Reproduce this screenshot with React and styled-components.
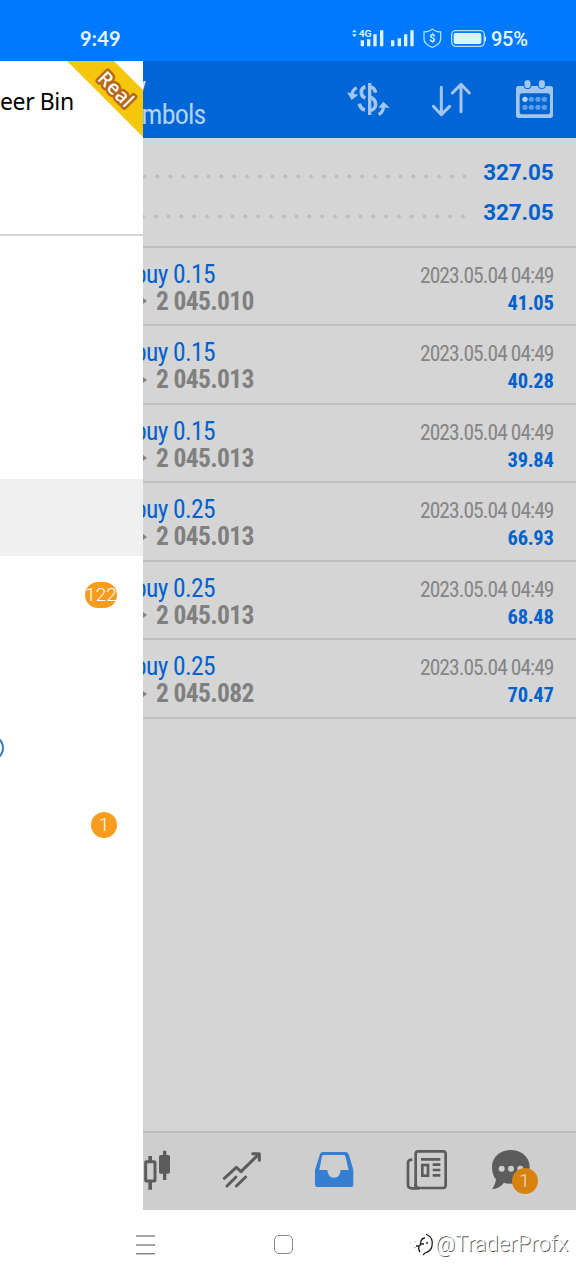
import React from 'react';
import styled, { createGlobalStyle, css } from 'styled-components';

const deals = [
  { volume: 'buy 0.15', price: '2 045.010', time: '2023.05.04 04:49', profit: '41.05' },
  { volume: 'buy 0.15', price: '2 045.013', time: '2023.05.04 04:49', profit: '40.28' },
  { volume: 'buy 0.15', price: '2 045.013', time: '2023.05.04 04:49', profit: '39.84' },
  { volume: 'buy 0.25', price: '2 045.013', time: '2023.05.04 04:49', profit: '66.93' },
  { volume: 'buy 0.25', price: '2 045.013', time: '2023.05.04 04:49', profit: '68.48' },
  { volume: 'buy 0.25', price: '2 045.082', time: '2023.05.04 04:49', profit: '70.47' }
];

const StatusIcons = () => (
  <svg width="136" height="24" viewBox="60 48 408 72" fill="#d9f4ff">
    <path d="M66 67l7-8 7 8zM66 73l7 8 7-8z" />
    <path d="M92 91h10v18H92zM111 88h10v21h-10zM130 73h10v36h-10zM150 61h10v48h-10z" />
    <text x="86" y="81" fontSize="29" fontWeight="700" fontFamily="Roboto" textLength="39" lengthAdjust="spacingAndGlyphs">4G</text>
    <path d="M183 91h10v18h-10zM203 85h10v24h-10zM222 73h10v36h-10zM241 61h10v48h-10z" />
    <path d="M307 58c8 6 17 8 25 8v20c0 13-12 21-25 26-13-5-25-13-25-26V66c8 0 17-2 25-8z" fill="none" stroke="#a9dcff" strokeWidth="4" />
    <text x="307" y="96" fontSize="32" fontWeight="700" fontFamily="Roboto" textAnchor="middle">$</text>
    <rect x="365" y="62" width="98" height="47" rx="12" fill="none" stroke="#a9dcff" strokeWidth="4" />
    <rect x="371" y="69" width="83" height="33" rx="5" />
    <path d="M465 78c5 2 5 14 0 16z" />
  </svg>
);

const SwapIcon = () => (
  <svg width="82" height="77" viewBox="0 153 246 231" fill="none" stroke="#a2c5ee" strokeWidth="11">
    <path d="M119 219v96" strokeWidth="10" />
    <path d="M119 231q15 1 18 17M119 262c24 4 24 38 0 39M106 230c-16 5-16 28 0 34M88 281q3 15 17 19" />
    <path d="M80 233q-14 8-14 22M146 314q14-8 14-24" strokeWidth="10" />
    <path d="M51 247l14 23 20-16zM145 293l15-18 19 18z" fill="#a2c5ee" stroke="none" />
  </svg>
);

const SortIcon = () => (
  <svg width="82" height="77" viewBox="246 153 246 231" fill="none" stroke="#a2c5ee" strokeWidth="9" strokeLinecap="round" strokeLinejoin="round">
    <path d="M334 232v82M310 289l24 25 25-25" />
    <path d="M393 305v-81M367 249l26-26 25 26" />
  </svg>
);

const CalendarIcon = () => (
  <svg width="82" height="77" viewBox="492 153 246 231" fill="#a2c5ee">
    <path fillRule="evenodd" d="M566 228h95q8 0 8 8v80q0 8-8 8h-95q-8 0-8-8v-80q0-8 8-8zm11 22q-8 0-8 8v47q0 8 8 8h75q8 0 8-8v-47q0-8-8-8z" />
    <rect x="582" y="209" width="21" height="27" rx="9" stroke="#0066d6" strokeWidth="3" />
    <rect x="625" y="209" width="21" height="27" rx="9" stroke="#0066d6" strokeWidth="3" />
    {[585, 604, 624, 643].map((x) => (
      <g key={x} fill="#5c9de6">
        <circle cx={x} cy="268" r="8" fill={x === 585 ? '#b9d3f2' : '#5c9de6'} />
        <circle cx={x} cy="292" r="8" />
      </g>
    ))}
  </svg>
);

const CandlesIcon = () => (
  <svg width="92" height="76" viewBox="-78 39 276 228" fill="#5c5c5c">
    <path d="M55 108h11v18H55zM55 182h11v27H55zM99 92h10v20H99zM99 155h10v25H99z" />
    <rect x="47" y="125" width="28" height="58" rx="2" fill="none" stroke="#5c5c5c" strokeWidth="9" />
    <rect x="87" y="105" width="33" height="56" rx="5" />
  </svg>
);

const TrendIcon = () => (
  <svg width="92" height="76" viewBox="198 39 276 228" fill="none" stroke="#5c5c5c" strokeWidth="9" strokeLinecap="round" strokeLinejoin="round">
    <path d="M283 175l36-33 14 13 54-53M368 101h20v20" />
    <path d="M291 198l27-27M319 198l28-27" />
  </svg>
);

const InboxIcon = () => (
  <svg width="92" height="76" viewBox="474 39 276 228" fill="#347fd3">
    <path fillRule="evenodd" d="M579 96h66q9 0 12 9l13 45v45q0 6-6 6H561q-6 0-6-6v-45l14-45q2-9 10-9zm2 9q-4 0-5 4l-8 41h24q2 23 20 23t20-23h24l-10-41q-1-4-5-4z" />
  </svg>
);

const NewsIcon = () => (
  <svg width="92" height="76" viewBox="81 39 276 228" fill="none" stroke="#5c5c5c" strokeWidth="8">
    <rect x="188" y="94" width="90" height="110" rx="8" />
    <path d="M178 119q-13 0-13 10v66q0 10 12 10h22q-12-1-12-14" />
    <path d="M204 118h58M239 134h23M239 150h23M239 166h23" />
    <rect x="208" y="135" width="17" height="32" />
  </svg>
);

const ChatIcon = () => (
  <svg width="92" height="76" viewBox="357 39 276 228" fill="#5c5c5c">
    <path d="M473 90c32 0 57 22 57 50s-25 51-57 51c-8 0-14-1-20-3-10 13-22 19-36 19 6-7 11-19 12-29-8-9-12-23-12-38 0-28 24-50 56-50z" />
    <g fill="#cecece">
      <circle cx="446" cy="146" r="9" />
      <circle cx="474" cy="146" r="9" />
      <circle cx="502" cy="146" r="9" />
    </g>
  </svg>
);

const App = () => (
  <Screen>
    <GlobalStyle />
    <StatusBar>
      <Clock>9:49</Clock>
      <StatusIcons />
      <Battery>95%</Battery>
    </StatusBar>
    <Body>
      <Drawer>
        <Profile>
          <AccountName>eer Bin</AccountName>
          <Corner viewBox="0 0 76 76">
            <path d="M0 0h47l29 29v47z" fill="#f6c60a" />
            <text x="0" y="0" transform="translate(29.500 18.500) rotate(45)">Real</text>
          </Corner>
        </Profile>
        <MenuRow $height={243} />
        <MenuRow $height={77} $active />
        <MenuRow $height={77}><Badge $wide>122</Badge></MenuRow>
        <MenuRow $height={77} />
        <MenuRow $height={76} $start><Ring /></MenuRow>
        <MenuRow $height={77}><Badge>1</Badge></MenuRow>
      </Drawer>
      <Main>
        <Header>
          <Titles>
            <Title>History</Title>
            <Subtitle>All symbols</Subtitle>
          </Titles>
          <SwapIcon />
          <SortIcon />
          <CalendarIcon />
        </Header>
        <Summary>
          <Total><Dots $end={0.4} />327.05</Total>
          <Total><Dots $end={2.1} />327.05</Total>
        </Summary>
        {deals.map((deal, index) => (
          <Deal key={index}>
            <Column>
              <Volume>{deal.volume}</Volume>
              <Price>
                <svg width="4" height="8" viewBox="0 0 4 8"><path d="M0 1l4 3-4 3z" fill="#808080" /></svg>
                {deal.price}
              </Price>
            </Column>
            <Column $right>
              <Time>{deal.time}</Time>
              <Profit>{deal.profit}</Profit>
            </Column>
          </Deal>
        ))}
        <TabBar>
          <CandlesIcon />
          <TrendIcon />
          <InboxIcon />
          <NewsIcon />
          <ChatTab>
            <ChatIcon />
            <ChatBadge>1</ChatBadge>
          </ChatTab>
        </TabBar>
      </Main>
    </Body>
    <NavBar>
      <svg width="20" height="20" viewBox="0 0 20 20" stroke="#8a8a8a" strokeWidth="1.6">
        <path d="M0 1h19M0 10h19M0 18.700h19" />
      </svg>
      <HomeKey />
      <Watermark>
        <svg width="27" height="24" viewBox="0 0 27 24" fill="none" stroke="#222" strokeWidth="1.300">
          <path d="M8 14h3q-1 4 1 6M12 14l1-5q1-3 4-3M12 12h4M18 2q8 4 6 12-1 5-7 7l-2 2" />
          <path d="M18 11h2" />
          <path d="M2 11h1M7 9v1M6 15l2 1" stroke="#bbb" />
        </svg>
        @TraderProfx
      </Watermark>
    </NavBar>
  </Screen>
);

const condensed = css`
  font-family: 'Roboto Condensed', Roboto, 'Liberation Sans', sans-serif;
  font-stretch: 75%;
  white-space: nowrap;
`;

const GlobalStyle = createGlobalStyle`
  * {
    box-sizing: border-box;
  }

  body {
    margin: 0;
    background: #fff;
    font-family: Roboto, 'Liberation Sans', sans-serif;
  }

  svg {
    display: block;
    flex-shrink: 0;
  }
`;

const Screen = styled.div`
  display: flex;
  flex-direction: column;
  width: 576px;
  height: 1280px;
  overflow: hidden;
`;

const StatusBar = styled.div`
  display: flex;
  align-items: flex-start;
  height: 61px;
  padding: 26px 0 0 80px;
  background: #0079ff;
  color: #e2f7ff;
`;

const Clock = styled.div`
  width: 270px;
  font: 700 20px/25px Lato, sans-serif;
  letter-spacing: 0.2px;
`;

const Battery = styled.div`
  margin-left: 5px;
  font: 500 20px/26px Roboto, sans-serif;
  letter-spacing: -0.3px;
`;

const Body = styled.div`
  display: flex;
  height: 1149px;
`;

const Drawer = styled.aside`
  width: 143px;
  overflow: hidden;
  background: #fff;
`;

const Profile = styled.div`
  position: relative;
  height: 175px;
  padding-top: 24px;
  border-bottom: 2px solid #d6d6d6;
`;

const AccountName = styled.div`
  color: #000;
  font: 400 23px/32px 'Noto Sans', sans-serif;
  letter-spacing: -0.4px;
  white-space: nowrap;
`;

const Corner = styled.svg`
  position: absolute;
  top: 0;
  right: 0;
  width: 76px;
  height: 76px;

  text {
    fill: #fff;
    stroke: #b5691a;
    stroke-width: 5px;
    stroke-linejoin: round;
    paint-order: stroke;
    font: 500 19.5px 'Noto Sans', sans-serif;
    letter-spacing: 0.4px;
  }
`;

const MenuRow = styled.div`
  display: flex;
  align-items: center;
  justify-content: ${props => (props.$start ? 'flex-start' : 'flex-end')};
  height: ${props => props.$height}px;
  padding-right: 26px;
  background: ${props => (props.$active ? '#f0f0f0' : '#fff')};
`;

const Badge = styled.span`
  width: ${props => (props.$wide ? 32 : 26)}px;
  height: 26px;
  border-radius: 13px;
  background: #f79c1c;
  color: #fff;
  font-size: 19px;
  font-weight: 300;
  line-height: 26px;
  text-align: center;
`;

const Ring = styled.span`
  width: 26px;
  height: 26px;
  margin-left: -22px;
  border: 2px solid #3b7cc4;
  border-radius: 50%;
`;

const Main = styled.main`
  display: flex;
  flex: 1;
  flex-direction: column;
  overflow: hidden;
  background: #d5d5d5;
`;

const Header = styled.header`
  display: flex;
  height: 77px;
  flex-shrink: 0;
  background: #0066d6;
`;

const Titles = styled.div`
  display: flex;
  flex-direction: column;
  width: 187px;
  padding-top: 13px;
`;

const Title = styled.div`
  ${condensed}
  display: flex;
  justify-content: flex-end;
  width: 3px;
  color: #e5effb;
  font-size: 22px;
  line-height: 24px;
`;

const Subtitle = styled.div`
  ${condensed}
  display: flex;
  justify-content: flex-end;
  width: 62.5px;
  color: #b2d1f3;
  font-size: 28px;
  letter-spacing: -0.8px;
  line-height: 34px;
`;

const Summary = styled.div`
  height: 109.5px;
  flex-shrink: 0;
  padding: 14px 22.5px 0 0;
  border-bottom: 2px solid #bfbfbf;
`;

const Total = styled.div`
  display: flex;
  align-items: center;
  height: 40px;
  color: #0062cc;
  font-size: 22.5px;
  font-weight: 700;
  letter-spacing: -0.15px;
`;

const Dots = styled.span`
  flex: 1;
  height: 5px;
  margin: 8px 12px 0 0;
  background: radial-gradient(circle, #bcbcbc 1.6px, transparent 2.3px) right ${props => props.$end}px center / 12.8px 5px repeat-x;
`;

const Deal = styled.div`
  display: flex;
  justify-content: space-between;
  height: 78.5px;
  flex-shrink: 0;
  padding: 11px 22.5px 0 0;
  border-bottom: 2px solid #bfbfbf;
`;

const Column = styled.div`
  display: flex;
  flex-direction: column;
  align-items: ${props => (props.$right ? 'flex-end' : 'flex-start')};
`;

const Volume = styled.div`
  ${condensed}
  margin-left: -9px;
  color: #0062cc;
  font-size: 25.5px;
  letter-spacing: -0.6px;
  line-height: 30px;
`;

const Price = styled.div`
  ${condensed}
  display: flex;
  align-items: center;
  gap: 9px;
  color: #808080;
  font-size: 25.5px;
  font-weight: 700;
  letter-spacing: -0.65px;
  line-height: 25px;
`;

const Time = styled.div`
  ${condensed}
  color: #868686;
  font-size: 21.5px;
  letter-spacing: -0.95px;
  line-height: 33px;
`;

const Profit = styled.div`
  ${condensed}
  color: #0062cc;
  font-size: 20.5px;
  font-weight: 700;
  letter-spacing: -0.3px;
  line-height: 22px;
`;

const TabBar = styled.nav`
  display: flex;
  height: 79px;
  margin-top: auto;
  border-top: 2px solid #bebebe;
  background: #cecece;

  > :first-child {
    margin-left: -39px;
  }
`;

const ChatTab = styled.div`
  position: relative;
`;

const ChatBadge = styled.span`
  position: absolute;
  top: 35px;
  left: 39.5px;
  width: 26px;
  height: 26px;
  border-radius: 50%;
  background: #d7820f;
  color: #e6e0d8;
  font-size: 19px;
  font-weight: 300;
  line-height: 26px;
  text-align: center;
`;

const NavBar = styled.div`
  display: flex;
  align-items: flex-start;
  height: 70px;
  padding: 25px 0 0 136px;
  background: #fff;
`;

const HomeKey = styled.div`
  width: 19px;
  height: 19px;
  margin: 0 119px 0 118px;
  border: 1.5px solid #8a8a8a;
  border-radius: 5px;
`;

const Watermark = styled.div`
  display: flex;
  align-items: center;
  height: 17px;
  margin-left: -4px;
  color: #fff;
  font-size: 22px;
  font-weight: 300;
  text-shadow: 1px 1px 0.5px #555;
  white-space: nowrap;
`;

export default App;
